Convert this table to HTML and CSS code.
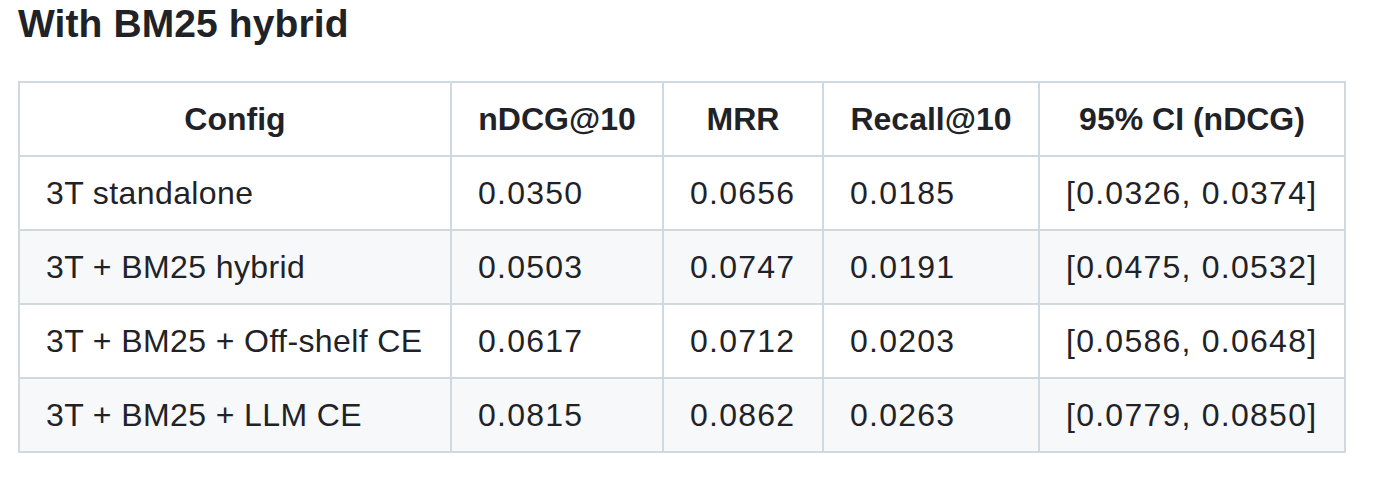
FILE: index.html
```html
<!DOCTYPE html>
<html lang="en">
<head>
<meta charset="utf-8">
<title>With BM25 hybrid</title>
<link rel="stylesheet" href="styles.css">
</head>
<body>
<main class="markdown">
  <h3 class="title">With BM25 hybrid</h3>
  <table class="results">
    <colgroup>
      <col class="c-config">
      <col class="c-ndcg">
      <col class="c-mrr">
      <col class="c-recall">
      <col class="c-ci">
    </colgroup>
    <thead>
      <tr>
        <th>Config</th>
        <th>nDCG@10</th>
        <th>MRR</th>
        <th>Recall@10</th>
        <th>95% CI (nDCG)</th>
      </tr>
    </thead>
    <tbody>
      <tr>
        <td class="label">3T standalone</td>
        <td class="num">0.0350</td>
        <td class="num">0.0656</td>
        <td class="num">0.0185</td>
        <td class="num">[0.0326, 0.0374]</td>
      </tr>
      <tr>
        <td class="label">3T + BM25 hybrid</td>
        <td class="num">0.0503</td>
        <td class="num">0.0747</td>
        <td class="num">0.0191</td>
        <td class="num">[0.0475, 0.0532]</td>
      </tr>
      <tr>
        <td class="label">3T + BM25 + Off-shelf CE</td>
        <td class="num">0.0617</td>
        <td class="num">0.0712</td>
        <td class="num">0.0203</td>
        <td class="num">[0.0586, 0.0648]</td>
      </tr>
      <tr>
        <td class="label">3T + BM25 + LLM CE</td>
        <td class="num">0.0815</td>
        <td class="num">0.0862</td>
        <td class="num">0.0263</td>
        <td class="num">[0.0779, 0.0850]</td>
      </tr>
    </tbody>
  </table>
</main>
</body>
</html>
```

FILE: styles.css
```css
html, body {
  margin: 0;
  padding: 0;
  background: #ffffff;
}

body {
  font-family: "Liberation Sans", Arial, sans-serif;
  color: #1f2328;
}

.markdown {
  padding: 0 0 0 18px;
}

.title {
  margin: 0 0 33.5px 0;
  font-size: 39px;
  line-height: 47.5px;
  font-weight: 700;
  letter-spacing: 0.1px;
  color: #1f2328;
}

.results {
  border-collapse: collapse;
  border-spacing: 0;
  table-layout: fixed;
  width: 1326px;
  font-size: 32px;
  line-height: 48px;
}

.c-config { width: 432px; }
.c-ndcg { width: 212px; }
.c-mrr { width: 160px; }
.c-recall { width: 216px; }
.c-ci { width: 306px; }

.results th,
.results td {
  border: 2px solid #d1d9e0;
  padding: 12px 26px;
  white-space: nowrap;
}

.results th {
  font-weight: 700;
  text-align: center;
}

.results td {
  text-align: left;
}

.results td.label {
  letter-spacing: 0.4px;
}

.results td.num {
  letter-spacing: 1.25px;
}

.results tbody tr:nth-child(2n) {
  background: #f6f8fa;
}
```
